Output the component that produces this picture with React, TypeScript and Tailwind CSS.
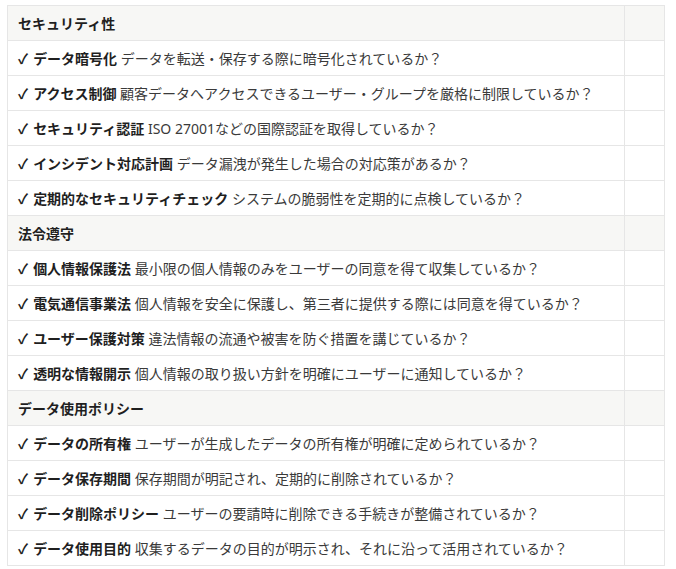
import React from "react";

type Item = { title: string; desc: string };
type Section = { heading: string; items: Item[] };

const sections: Section[] = [
  {
    heading: "セキュリティ性",
    items: [
      { title: "データ暗号化", desc: "データを転送・保存する際に暗号化されているか？" },
      { title: "アクセス制御", desc: "顧客データへアクセスできるユーザー・グループを厳格に制限しているか？" },
      { title: "セキュリティ認証", desc: "ISO 27001などの国際認証を取得しているか？" },
      { title: "インシデント対応計画", desc: "データ漏洩が発生した場合の対応策があるか？" },
      { title: "定期的なセキュリティチェック", desc: "システムの脆弱性を定期的に点検しているか？" },
    ],
  },
  {
    heading: "法令遵守",
    items: [
      { title: "個人情報保護法", desc: "最小限の個人情報のみをユーザーの同意を得て収集しているか？" },
      { title: "電気通信事業法", desc: "個人情報を安全に保護し、第三者に提供する際には同意を得ているか？" },
      { title: "ユーザー保護対策", desc: "違法情報の流通や被害を防ぐ措置を講じているか？" },
      { title: "透明な情報開示", desc: "個人情報の取り扱い方針を明確にユーザーに通知しているか？" },
    ],
  },
  {
    heading: "データ使用ポリシー",
    items: [
      { title: "データの所有権", desc: "ユーザーが生成したデータの所有権が明確に定められているか？" },
      { title: "データ保存期間", desc: "保存期間が明記され、定期的に削除されているか？" },
      { title: "データ削除ポリシー", desc: "ユーザーの要請時に削除できる手続きが整備されているか？" },
      { title: "データ使用目的", desc: "収集するデータの目的が明示され、それに沿って活用されているか？" },
    ],
  },
];

const cell = "border border-[#e6e6e6] h-[35px] px-[10px] py-0 align-middle";

const App: React.FC = () => {
  return (
    <div
      className="pt-[5px] pl-[7px] bg-white min-h-screen"
      style={{ fontFamily: '"Noto Sans", "Noto Sans CJK JP", sans-serif' }}
    >
      <table className="border-collapse w-[658px] text-[14px] text-[#3a3a3a]">
        <colgroup>
          <col className="w-[618px]" />
          <col className="w-[40px]" />
        </colgroup>
        <tbody>
          {sections.map((section) => (
            <React.Fragment key={section.heading}>
              <tr className="bg-[#f7f7f5]">
                <td className={`${cell} font-bold text-[#1f1f1f]`}>{section.heading}</td>
                <td className={cell}></td>
              </tr>
              {section.items.map((item) => (
                <tr key={item.title}>
                  <td className={`${cell} whitespace-nowrap`}>
                    <span className="font-bold text-[#1f1f1f]">
                      <span className="mr-[5px]">✓</span>
                      {item.title}
                    </span>{" "}
                    {item.desc}
                  </td>
                  <td className={cell}></td>
                </tr>
              ))}
            </React.Fragment>
          ))}
        </tbody>
      </table>
    </div>
  );
};

export default App;
